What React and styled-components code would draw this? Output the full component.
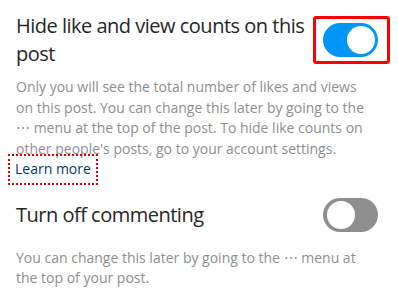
import styled, { createGlobalStyle } from "styled-components";

const GlobalStyle = createGlobalStyle`
  body {
    margin: 0;
    background: #ffffff;
    font-family: "Open Sans", "Noto Sans", sans-serif;
  }
`;

const Page = styled.div`
  display: flex;
  flex-direction: column;
  gap: 11px;
  padding: 12px 8px 0 16px;
`;

const Section = styled.section`
  display: flex;
  flex-direction: column;
  gap: 9px;
`;

const Row = styled.div`
  display: flex;
  align-items: center;
  justify-content: space-between;
  gap: 2px;
`;

const Title = styled.h2`
  flex: 1;
  margin: 0;
  font-size: 20px;
  font-weight: 400;
  line-height: 28px;
  letter-spacing: -0.5px;
  color: #262626;
`;

const Description = styled.div`
  max-width: 354px;
  font-size: 14px;
  line-height: 20.5px;
  color: #8e8e8e;
`;

const Link = styled.a`
  display: table;
  margin: -3px 0 -3px -6px;
  padding: 3px 5px;
  color: #00376b;
  text-decoration: none;
  outline: ${({ focused }) => (focused ? "2px dotted #e00000" : "none")};
`;

const SwitchFrame = styled.div`
  display: flex;
  padding: 4px 9px 4px 7px;
  border: 3px solid ${({ focused }) => (focused ? "#ff0000" : "transparent")};
  border-radius: 3px;
`;

const Track = styled.button`
  position: relative;
  width: 55px;
  height: 34px;
  padding: 0;
  border: none;
  border-radius: 17px;
  background: ${({ on }) => (on ? "#0095f6" : "#8e8e8e")};
  cursor: pointer;
`;

const Thumb = styled.span`
  position: absolute;
  top: 3px;
  left: ${({ on }) => (on ? "24px" : "4px")};
  width: 28px;
  height: 28px;
  border-radius: 50%;
  background: #ffffff;
`;

function Switch({ on, focused }) {
  return (
    <SwitchFrame focused={focused}>
      <Track on={on} aria-pressed={on}>
        <Thumb on={on} />
      </Track>
    </SwitchFrame>
  );
}

export default function App() {
  return (
    <>
      <GlobalStyle />
      <Page>
        <Section>
          <Row>
            <Title>Hide like and view counts on this post</Title>
            <Switch on focused />
          </Row>
          <Description>
            Only you will see the total number of likes and views on this post.
            You can change this later by going to the ⋯ menu at the top of the
            post. To hide like counts on other people's posts, go to your
            account settings.
            <Link href="#" focused>
              Learn more
            </Link>
          </Description>
        </Section>
        <Section>
          <Row>
            <Title>Turn off commenting</Title>
            <Switch />
          </Row>
          <Description>
            You can change this later by going to the ⋯ menu at the top of your
            post.
          </Description>
        </Section>
      </Page>
    </>
  );
}
